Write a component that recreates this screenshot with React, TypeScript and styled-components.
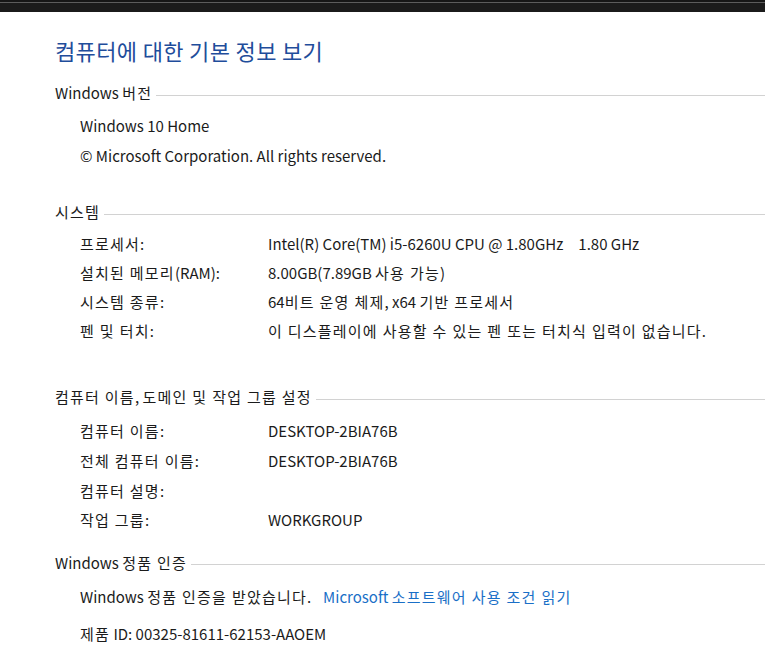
import React from "react";
import styled, { createGlobalStyle } from "styled-components";

const Global = createGlobalStyle`
  html, body { margin: 0; padding: 0; background: #ffffff; }
  body {
    font-family: "Noto Sans CJK KR", "Noto Sans", sans-serif;
    color: #1b1b1b;
    overflow: hidden;
  }
`;

const Page = styled.div`
  width: 765px;
  height: 650px;
  background: #ffffff;
  overflow: hidden;
`;

const TopBar = styled.div`
  height: 12px;
  background: #1b1b1b;
  box-shadow: inset 0 2px 0 #161616, inset 0 3px 0 #5c5c5c;
`;

const Content = styled.div`
  padding-left: 55px;
`;

const Title = styled.h1`
  margin: 23px 0 0 0;
  font-size: 22px;
  font-weight: 400;
  line-height: 30px;
  letter-spacing: 0.35px;
  color: #1f4d9b;
`;

const Section = styled.section<{ $gap: number }>`
  margin-top: ${(p) => p.$gap}px;
`;

const Header = styled.div`
  display: flex;
  align-items: center;
  height: 24px;
  font-size: 15px;
  line-height: 24px;
  white-space: nowrap;
`;

const HeaderText = styled.span`
  flex: none;
`;

const HeaderLine = styled.div`
  flex: 1;
  height: 1px;
  margin: 4px 0 0 4px;
  background: #d2d2d2;
`;

const Rows = styled.div<{ $row: number; $top: number }>`
  margin-top: ${(p) => p.$top}px;
  padding-left: 25px;
  display: grid;
  grid-template-columns: 188px auto;
  grid-auto-rows: ${(p) => p.$row}px;
  align-items: center;
  font-size: 15px;
  white-space: nowrap;
`;

const Line = styled.div`
  grid-column: 1 / -1;
`;

const Label = styled.div``;
const Value = styled.div``;

const Speed = styled.span`
  margin-left: 15px;
`;

const Hangul = styled.span`
  letter-spacing: 0.08em;
  word-spacing: 0.02em;
`;

const Link = styled.a`
  color: #1a6fc7;
  text-decoration: none;
  margin-left: 12px;
`;

const HANGUL_RUN = /([\uAC00-\uD7A3\u3131-\u318E]+(?: +[\uAC00-\uD7A3\u3131-\u318E]+)*)/;

function K({ children }: { children: string }) {
  const parts = children.split(HANGUL_RUN);
  return (
    <>
      {parts.map((part, i) =>
        i % 2 === 1 ? <Hangul key={i}>{part}</Hangul> : <React.Fragment key={i}>{part}</React.Fragment>
      )}
    </>
  );
}

type Row = [string, React.ReactNode];

const systemRows: Row[] = [
  [
    "프로세서:",
    <>
      Intel(R) Core(TM) i5-6260U CPU @ 1.80GHz<Speed>1.80 GHz</Speed>
    </>,
  ],
  ["설치된 메모리(RAM):", <K>8.00GB(7.89GB 사용 가능)</K>],
  ["시스템 종류:", <K>64비트 운영 체제, x64 기반 프로세서</K>],
  ["펜 및 터치:", <K>이 디스플레이에 사용할 수 있는 펜 또는 터치식 입력이 없습니다.</K>],
];

const nameRows: Row[] = [
  ["컴퓨터 이름:", "DESKTOP-2BIA76B"],
  ["전체 컴퓨터 이름:", "DESKTOP-2BIA76B"],
  ["컴퓨터 설명:", ""],
  ["작업 그룹:", "WORKGROUP"],
];

function SectionHeader({ text }: { text: string }) {
  return (
    <Header>
      <HeaderText>
        <K>{text}</K>
      </HeaderText>
      <HeaderLine />
    </Header>
  );
}

function PairRows({ rows, row, top }: { rows: Row[]; row: number; top: number }) {
  return (
    <Rows $row={row} $top={top}>
      {rows.map(([l, v]) => (
        <React.Fragment key={l}>
          <Label>
            <K>{l}</K>
          </Label>
          <Value>{v}</Value>
        </React.Fragment>
      ))}
    </Rows>
  );
}

export default function App() {
  return (
    <Page>
      <Global />
      <TopBar />
      <Content>
        <Title>컴퓨터에 대한 기본 정보 보기</Title>

        <Section $gap={16}>
          <SectionHeader text="Windows 버전" />
          <Rows $row={30} $top={5}>
            <Line>Windows 10 Home</Line>
            <Line>© Microsoft Corporation. All rights reserved.</Line>
          </Rows>
        </Section>

        <Section $gap={30}>
          <SectionHeader text="시스템" />
          <PairRows rows={systemRows} row={29} top={5} />
        </Section>

        <Section $gap={40}>
          <SectionHeader text="컴퓨터 이름, 도메인 및 작업 그룹 설정" />
          <PairRows rows={nameRows} row={29.7} top={7} />
        </Section>

        <Section $gap={16}>
          <SectionHeader text="Windows 정품 인증" />
          <Rows $row={37} $top={3}>
            <Line>
              <K>Windows 정품 인증을 받았습니다.</K>
              <Link href="#">
                <K>Microsoft 소프트웨어 사용 조건 읽기</K>
              </Link>
            </Line>
            <Line>
              <K>제품 ID: 00325-81611-62153-AAOEM</K>
            </Line>
          </Rows>
        </Section>
      </Content>
    </Page>
  );
}
